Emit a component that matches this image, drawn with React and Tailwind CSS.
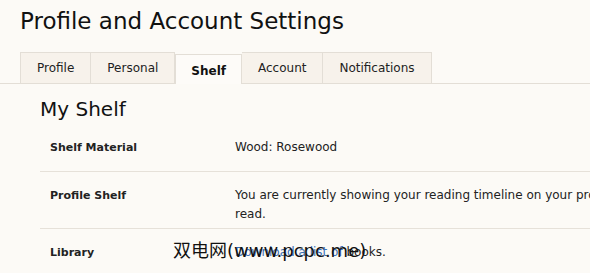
import React from 'react';

const tabs = ['Profile', 'Personal', 'Shelf', 'Account', 'Notifications'];

const Row = ({ label, children, last, tight }) => (
  <div className={`flex ${last ? '' : 'border-b border-[#e6e1d9]'}`}>
    <div className="w-[195px] shrink-0 pl-[10px] py-[14px] font-bold text-[11px] leading-[19px] text-[#222]">{label}</div>
    <div className={`pt-[14px] ${tight ? 'pb-[4px]' : 'pb-[14px]'} text-[12px] text-[#222] leading-[19px]`}>{children}</div>
  </div>
);

const App = () => {
  return (
    <div
      className="w-[590px] h-[273px] overflow-hidden bg-[#fcfaf6] text-[#111]"
      style={{ fontFamily: '"DejaVu Sans", "Noto Sans CJK SC", sans-serif' }}
    >
      <h1 className="pl-[20px] pt-[6px] text-[23px] leading-[30px] text-[#111]">Profile and Account Settings</h1>

      {/* Tabs */}
      <div className="mt-[16px] flex items-end border-b border-[#e3ded6] pl-[20px] h-[32px]">
        {tabs.map((t) =>
          t === 'Shelf' ? (
            <div
              key={t}
              className="h-[30px] -mb-px px-[15px] bg-[#fdfbf8] border border-b-0 border-[#e3ded6] flex items-center pt-[3px] text-[12px] font-bold text-[#111]"
            >
              {t}
            </div>
          ) : (
            <div
              key={t}
              className="h-[31px] px-[16px] bg-[#f7f2eb] border-r border-t border-[#e3ded6] first:border-l flex items-center text-[12px] text-[#222]"
            >
              {t}
            </div>
          )
        )}
      </div>

      <div className="pl-[40px] w-[760px]">
        <h2 className="pt-[10px] text-[20px] leading-[30px] text-[#111]">My Shelf</h2>
        <div>
          <Row label="Shelf Material">Wood: Rosewood</Row>
          <Row label="Profile Shelf" tight>
            <span className="whitespace-nowrap">You are currently showing your reading timeline on your profile. Show books you've</span>
            <br />
            read.
          </Row>
          <Row label="Library" last>
            <div className="relative">
              <span className="text-[#3b6fb6]">Download a list of </span>
              <span>books.</span>
              <span className="absolute left-[-62px] top-[-4px] text-[18px] leading-[24px] text-[#111] whitespace-nowrap">双电网(www.pcpc.me)</span>
            </div>
          </Row>
        </div>
      </div>
    </div>
  );
};

export default App;
